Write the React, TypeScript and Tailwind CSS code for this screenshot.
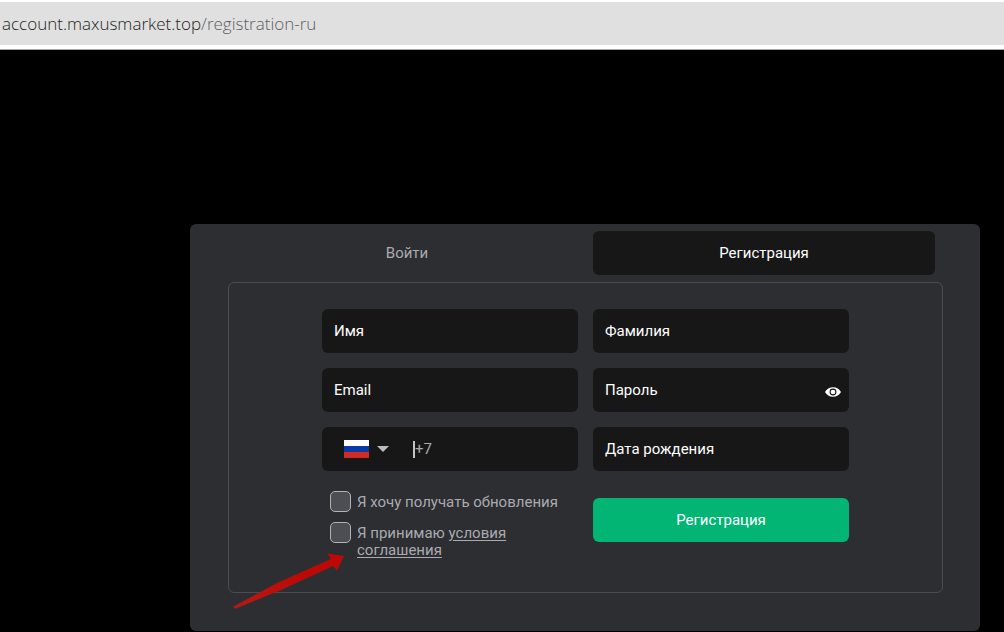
import type { InputHTMLAttributes, ReactNode } from "react";

export default function App() {
  return (
    <div className="flex min-h-screen flex-col bg-black font-['Roboto','Open_Sans',sans-serif] text-[15px] text-white">
      {/* Address bar */}
      <header className="border-b border-[#a8a8a8] bg-white pt-0.5 pb-1">
        <div className="flex h-[43px] items-center bg-[#e0e0e0] px-0.5 font-['Open_Sans','Noto_Sans',sans-serif] text-[17px] font-light text-[#1c1e20]">
          <span>account.maxusmarket.top</span>
          <span className="text-[#5c5e60]">/registration-ru</span>
        </div>
      </header>

      <main className="pt-[174px] pr-6 pl-[190px]">
        <section className="relative rounded-md bg-[#2d2e32] pt-[7px] pr-[37px] pb-[38px] pl-[38px]">
          {/* Tabs */}
          <div className="grid grid-cols-2 gap-[15px] px-2 pb-[7px]">
            <button type="button" className="h-11 rounded-md text-[#a9abae]">
              Войти
            </button>
            <button type="button" className="h-11 rounded-md bg-[#171717]">
              Регистрация
            </button>
          </div>

          <form className="rounded-md border border-[#4b4c51] px-[93px] pt-[26px] pb-[33px]">
            <div className="grid grid-cols-2 gap-[15px]">
              <Field placeholder="Имя" />
              <Field placeholder="Фамилия" />
              <Field type="email" placeholder="Email" />
              <Field type="password" placeholder="Пароль">
                <button type="button" aria-label="Показать пароль" className="pt-1 pr-2">
                  <EyeIcon />
                </button>
              </Field>
              <PhoneField />
              <Field placeholder="Дата рождения" />
            </div>

            <div className="mt-5 grid grid-cols-2 gap-[15px]">
              <div className="flex flex-col gap-[10px] pl-2 text-[#a9abae]">
                <Check id="updates">Я хочу получать обновления</Check>
                <Check id="terms">
                  Я принимаю{" "}
                  <a href="#terms" className="underline underline-offset-2">
                    условия соглашения
                  </a>
                </Check>
              </div>
              <button type="submit" className="mt-[7px] h-11 rounded-md bg-[#02b575]">
                Регистрация
              </button>
            </div>
          </form>

          {/* Arrow pointing at the terms checkbox */}
          <svg
            className="pointer-events-none absolute top-[328px] left-[42px]"
            width="114"
            height="58"
            viewBox="232 552 114 58"
            aria-hidden="true"
          >
            <defs>
              <linearGradient id="arrow" x1="0" y1="1" x2="1" y2="0">
                <stop offset="0" stopColor="#b51a18" />
                <stop offset="0.6" stopColor="#bd0905" />
              </linearGradient>
            </defs>
            <path
              d="M233.5 606.5L277 583L331 559L327.5 553.5L344 556L337 570.5L333 566L281 590L236 608.5Q233.5 609 233.5 606.5Z"
              fill="url(#arrow)"
            />
          </svg>
        </section>
      </main>
    </div>
  );
}

function Field({
  children,
  placeholder,
  ...props
}: InputHTMLAttributes<HTMLInputElement> & { children?: ReactNode }) {
  return (
    <div className="flex h-11 items-center rounded-md bg-[#171717]">
      <input
        aria-label={placeholder}
        placeholder={placeholder}
        className="h-full min-w-0 flex-1 bg-transparent px-3 outline-none placeholder:text-white"
        {...props}
      />
      {children}
    </div>
  );
}

function EyeIcon() {
  return (
    <svg width="16" height="10" viewBox="0 0 16 10" aria-hidden="true">
      <path fill="#fff" d="M0 5C1.6 2 4.5.3 8 .3S14.4 2 16 5c-1.6 3-4.5 4.7-8 4.7S1.6 8 0 5z" />
      <circle cx="8" cy="5" r="2.9" fill="#fff" stroke="#171717" strokeWidth="1.1" />
    </svg>
  );
}

function PhoneField() {
  return (
    <div className="flex h-11 items-center rounded-md bg-[#171717] pl-[22px]">
      <div className="relative flex items-center gap-2">
        <svg width="25" height="18" viewBox="0 0 25 18" aria-hidden="true">
          <path fill="#fff" d="M0 0h25v6H0z" />
          <path fill="#0a3aa6" d="M0 6h25v6H0z" />
          <path fill="#d02b22" d="M0 12h25v6H0z" />
        </svg>
        <svg width="12" height="6" viewBox="0 0 12 6" aria-hidden="true">
          <path fill="#b9bbbd" d="M0 0h12L6 6z" />
        </svg>
        <select aria-label="Код страны" className="absolute inset-0 opacity-0">
          <option>+7</option>
        </select>
      </div>
      <span className="ml-6 h-[17px] w-0.5 bg-[#c4c4c4]" />
      <input
        type="tel"
        aria-label="Телефон"
        placeholder="+7"
        className="h-full min-w-0 flex-1 bg-transparent outline-none placeholder:text-[#a9abae]"
      />
    </div>
  );
}

function Check({ id, children }: { id: string; children: ReactNode }) {
  return (
    <div className="flex items-start gap-1.5">
      <input
        id={id}
        type="checkbox"
        className="h-[21px] w-[21px] shrink-0 appearance-none rounded-[5px] border border-[#b0b2b5] bg-[#4b4e53] checked:bg-[#02b575]"
      />
      <label htmlFor={id} className="pt-[3px] leading-[17px]">
        {children}
      </label>
    </div>
  );
}
